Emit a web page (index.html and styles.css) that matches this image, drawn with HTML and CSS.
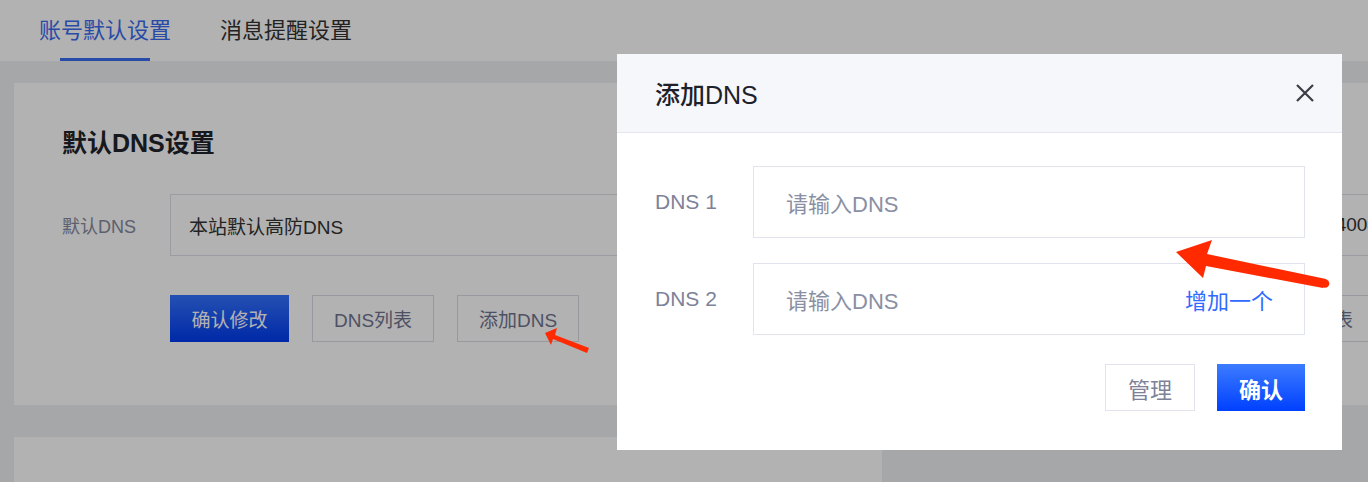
FILE: index.html
```html
<!DOCTYPE html>
<html lang="zh-CN">

<head>
    <meta charset="UTF-8">
    <meta name="viewport" content="width=device-width, initial-scale=1.0">
    <title>账号默认设置</title>
    <link rel="stylesheet" href="styles.css">
</head>

<body>
    <div class="tabs">
        <a class="tab tab-active">账号默认设置</a>
        <a class="tab">消息提醒设置</a>
    </div>

    <div class="main">
        <section class="card">
            <h2 class="card-title">默认DNS设置</h2>
            <div class="form-row">
                <label class="form-label">默认DNS</label>
                <div class="select-box">
                    <span>本站默认高防DNS</span>
                    <span class="select-extra">4008-000-000</span>
                </div>
            </div>
            <div class="btn-row">
                <button class="btn btn-primary">确认修改</button>
                <button class="btn btn-plain">DNS列表</button>
                <button class="btn btn-plain">添加DNS</button>
                <button class="btn btn-plain btn-far">DNS列表</button>
            </div>
        </section>
        <section class="card card-small"></section>
    </div>

    <div class="mask"></div>

    <div class="modal">
        <div class="modal-header">
            <span class="modal-title">添加DNS</span>
            <svg class="modal-close" width="18" height="18" viewBox="0 0 18 18">
                <path d="M1 1 L17 17 M17 1 L1 17" stroke="#3a3d46" stroke-width="2.2" fill="none" />
            </svg>
        </div>
        <div class="modal-body">
            <div class="field">
                <span class="field-label">DNS 1</span>
                <div class="field-input">
                    <span class="placeholder">请输入DNS</span>
                </div>
            </div>
            <div class="field">
                <span class="field-label">DNS 2</span>
                <div class="field-input">
                    <span class="placeholder">请输入DNS</span>
                    <a class="add-link">增加一个</a>
                </div>
            </div>
            <div class="modal-footer">
                <button class="btn-modal btn-manage">管理</button>
                <button class="btn-modal btn-ok">确认</button>
            </div>
        </div>
    </div>

    <!-- annotation arrows -->
    <svg class="arrows" width="1368" height="482" viewBox="0 0 1368 482">
        <polygon fill="#ff2a00"
            points="545,333 557,328 555,335 589,348 587,353 553,339 551,345" />
        <polygon fill="#ff2a00"
            points="1176,252 1212,240 1207,254 1326,279 1323,288 1206,266 1203,278" />
        <circle cx="1325" cy="283.5" r="4.3" fill="#ff2a00" />
    </svg>
</body>

</html>
```

FILE: styles.css
```css
* {
    box-sizing: border-box;
}

body {
    margin: 0;
    font-family: "Liberation Sans", "Noto Sans CJK SC", sans-serif;
    background-color: #edeff3;
    overflow: hidden;
    height: 482px;
}

.tabs {
    height: 61px;
    background-color: #fff;
    display: flex;
    gap: 49px;
    padding-left: 39px;
}

.tab {
    position: relative;
    font-size: 22px;
    line-height: 61px;
    color: #333;
}

.tab-active {
    color: #3a6cf0;
}

.tab-active::after {
    content: "";
    position: absolute;
    left: 21px;
    bottom: 0;
    width: 90px;
    height: 3px;
    background-color: #3a6cf0;
}

.main {
    padding: 22px 0 0 14px;
}

.card {
    background-color: #fff;
    height: 322px;
    padding: 44px 0 0 48px;
    overflow: hidden;
    margin-bottom: 32px;
}

.card-small {
    width: 868px;
    height: 60px;
}

.card-title {
    margin: 0;
    font-size: 25px;
    line-height: 32px;
    font-weight: 600;
    color: #1f2329;
}

.form-row {
    display: flex;
    align-items: center;
    margin-top: 35px;
}

.form-label {
    flex: none;
    width: 108px;
    font-size: 18px;
    color: #858a9e;
}

.select-box {
    flex: none;
    width: 1305px;
    height: 62px;
    border: 1px solid #dde0e7;
    display: flex;
    align-items: center;
    justify-content: space-between;
    padding: 0 20px 0 18px;
    font-size: 19px;
    color: #333;
}

.btn-row {
    display: flex;
    gap: 23px;
    margin-top: 39px;
    padding-left: 108px;
}

.btn {
    flex: none;
    height: 47px;
    font-family: inherit;
    font-size: 19px;
    border-radius: 0;
    cursor: pointer;
}

.btn-primary {
    width: 119px;
    border: none;
    color: #fff;
    background: linear-gradient(#3573ff, #003bf0);
}

.btn-plain {
    width: 122px;
    border: 1px solid #d8dbe3;
    background-color: #fff;
    color: #707590;
}

.btn-far {
    margin-left: 652px;
    width: 160px;
    text-align: left;
    padding-left: 20px;
}

.mask {
    position: fixed;
    inset: 0;
    background-color: rgba(0, 0, 0, 0.3);
}

.modal {
    position: absolute;
    left: 617px;
    top: 54px;
    width: 725px;
    height: 396px;
    background-color: #fff;
}

.modal-header {
    height: 79px;
    background-color: #f6f7fb;
    border-bottom: 1px solid #e4e6ef;
    display: flex;
    align-items: center;
    justify-content: space-between;
    padding: 0 28px 0 38px;
}

.modal-title {
    font-size: 25px;
    font-weight: 500;
    color: #1d2129;
}

.modal-body {
    padding: 33px 37px 0 38px;
}

.field {
    display: flex;
    align-items: center;
    margin-bottom: 25px;
}

.field-label {
    flex: none;
    width: 98px;
    font-size: 21px;
    color: #7d8298;
}

.field-input {
    flex: 1;
    height: 72px;
    border: 1px solid #e1e4ee;
    display: flex;
    align-items: center;
    justify-content: space-between;
    padding: 0 31px 0 32px;
    font-size: 22px;
}

.placeholder {
    color: #8a8fa4;
}

.add-link {
    color: #2f6bff;
}

.modal-footer {
    display: flex;
    justify-content: flex-end;
    gap: 22px;
    margin-top: 4px;
    padding-top: 4px;
}

.btn-modal {
    flex: none;
    height: 47px;
    font-family: inherit;
    font-size: 22px;
    border-radius: 0;
    cursor: pointer;
}

.btn-manage {
    width: 90px;
    border: 1px solid #e1e4ee;
    background-color: #fff;
    color: #7d8298;
}

.btn-ok {
    width: 88px;
    border: none;
    color: #fff;
    font-weight: 600;
    background: linear-gradient(#3d7cff, #0040ff);
}

.arrows {
    position: absolute;
    left: 0;
    top: 0;
}
```
